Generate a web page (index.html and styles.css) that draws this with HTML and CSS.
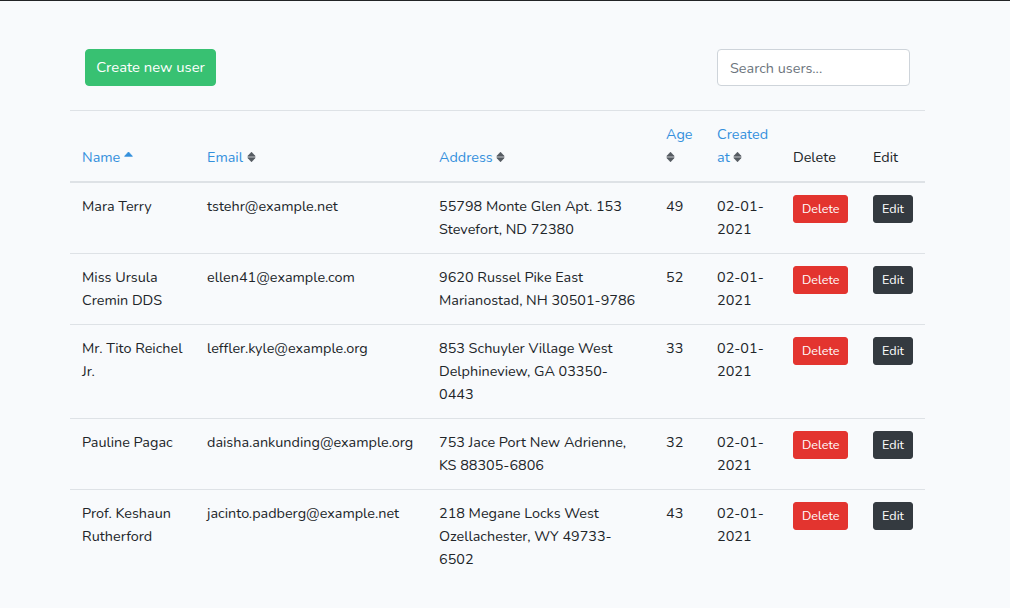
FILE: index.html
```html
<!DOCTYPE html>
<html lang="en">
<head>
<meta charset="utf-8">
<title>Users</title>
<link rel="stylesheet" href="styles.css">
</head>
<body>
<div class="page">
  <div class="toolbar">
    <button class="btn btn-success">Create new user</button>
    <input class="search" type="text" placeholder="Search users...">
  </div>
  <table class="users">
    <colgroup>
      <col class="c-name"><col class="c-email"><col class="c-address"><col class="c-age"><col class="c-created"><col class="c-delete"><col class="c-edit">
    </colgroup>
    <thead>
      <tr>
        <th><a class="sortable">Name <svg class="sort" viewBox="0 0 9 14"><path d="M0.6 6.3h7.8L4.5 2z" fill="#3490dc" stroke="#3490dc" stroke-width="0.8" stroke-linejoin="round"/></svg></a></th>
        <th><a class="sortable">Email <svg class="sort" viewBox="0 0 9 14"><path d="M0.8 6.2h7.4L4.5 2.2z M0.8 7.8h7.4L4.5 11.8z" fill="#555b61" stroke="#555b61" stroke-width="0.8" stroke-linejoin="round"/></svg></a></th>
        <th><a class="sortable">Address <svg class="sort" viewBox="0 0 9 14"><path d="M0.8 6.2h7.4L4.5 2.2z M0.8 7.8h7.4L4.5 11.8z" fill="#555b61" stroke="#555b61" stroke-width="0.8" stroke-linejoin="round"/></svg></a></th>
        <th><a class="sortable">Age <svg class="sort" viewBox="0 0 9 14"><path d="M0.8 6.2h7.4L4.5 2.2z M0.8 7.8h7.4L4.5 11.8z" fill="#555b61" stroke="#555b61" stroke-width="0.8" stroke-linejoin="round"/></svg></a></th>
        <th><a class="sortable">Created at <svg class="sort" viewBox="0 0 9 14"><path d="M0.8 6.2h7.4L4.5 2.2z M0.8 7.8h7.4L4.5 11.8z" fill="#555b61" stroke="#555b61" stroke-width="0.8" stroke-linejoin="round"/></svg></a></th>
        <th>Delete</th>
        <th>Edit</th>
      </tr>
    </thead>
    <tbody>
      <tr>
        <td>Mara Terry</td>
        <td>tstehr@example.net</td>
        <td>55798 Monte Glen Apt. 153 Stevefort, ND 72380</td>
        <td>49</td>
        <td>02-01-2021</td>
        <td><button class="btn btn-sm btn-danger">Delete</button></td>
        <td><button class="btn btn-sm btn-dark">Edit</button></td>
      </tr>
      <tr>
        <td>Miss Ursula Cremin DDS</td>
        <td>ellen41@example.com</td>
        <td>9620 Russel Pike East Marianostad, NH 30501-9786</td>
        <td>52</td>
        <td>02-01-2021</td>
        <td><button class="btn btn-sm btn-danger">Delete</button></td>
        <td><button class="btn btn-sm btn-dark">Edit</button></td>
      </tr>
      <tr>
        <td>Mr. Tito Reichel Jr.</td>
        <td>leffler.kyle@example.org</td>
        <td>853 Schuyler Village West Delphineview, GA 03350-0443</td>
        <td>33</td>
        <td>02-01-2021</td>
        <td><button class="btn btn-sm btn-danger">Delete</button></td>
        <td><button class="btn btn-sm btn-dark">Edit</button></td>
      </tr>
      <tr>
        <td>Pauline Pagac</td>
        <td>daisha.ankunding@example.org</td>
        <td>753 Jace Port New Adrienne, KS 88305-6806</td>
        <td>32</td>
        <td>02-01-2021</td>
        <td><button class="btn btn-sm btn-danger">Delete</button></td>
        <td><button class="btn btn-sm btn-dark">Edit</button></td>
      </tr>
      <tr>
        <td>Prof. Keshaun Rutherford</td>
        <td>jacinto.padberg@example.net</td>
        <td>218 Megane Locks West Ozellachester, WY 49733-6502</td>
        <td>43</td>
        <td>02-01-2021</td>
        <td><button class="btn btn-sm btn-danger">Delete</button></td>
        <td><button class="btn btn-sm btn-dark">Edit</button></td>
      </tr>
    </tbody>
  </table>
</div>
</body>
</html>
```

FILE: styles.css
```css
* { box-sizing: border-box; }
html, body { margin: 0; padding: 0; }
body {
  background: #f8fafc;
  border-top: 1px solid #222426;
  font-family: "Nunito", "Lato", "Noto Sans", sans-serif;
  font-size: 14.4px;
  line-height: 23px;
  color: #212529;
}
.page {
  width: 855px;
  margin: 0 0 0 70px;
  padding-top: 48px;
}
.toolbar {
  display: flex;
  justify-content: space-between;
  align-items: center;
  padding: 0 15px;
  margin-bottom: 24px;
}
.btn {
  font-family: inherit;
  font-size: 14.4px;
  line-height: 1.6;
  border: 1px solid transparent;
  border-radius: 4px;
  padding: 5px 12px;
  cursor: pointer;
  color: #fff;
}
.btn-success { background: #38c172; border-color: #38c172; height: 37px; width: 131px; padding: 0; font-size: 14.8px; }
.search {
  width: 193px;
  height: 37px;
  border: 1px solid #ced4da;
  border-radius: 4px;
  background: #fff;
  padding: 6px 12px;
  font-family: inherit;
  font-size: 14.4px;
  color: #495057;
}
.search::placeholder { color: #6c757d; }
.users {
  width: 100%;
  border-collapse: collapse;
  table-layout: fixed;
}
.c-name { width: 125px; }
.c-email { width: 232px; }
.c-address { width: 227px; }
.c-age { width: 51px; }
.c-created { width: 76px; }
.c-delete { width: 80px; }
.c-edit { width: 64px; }
.users th, .users td {
  padding: 12px;
  border-top: 1px solid #dee2e6;
  text-align: left;
}
.users th {
  vertical-align: bottom;
  font-weight: 400;
  border-bottom: 2px solid #dee2e6;
}
.users td { vertical-align: top; }
.users thead + tbody tr:first-child td { border-top: none; }
.sortable { color: #3490dc; text-decoration: none; cursor: pointer; }
.sort { width: 9px; height: 14px; vertical-align: -2px; }
.btn-sm {
  font-size: 12.6px;
  line-height: 1.5;
  padding: 4px 8px;
  border-radius: 3px;
  height: 28px;
}
.btn-danger { background: #e3342f; border-color: #e3342f; }
.btn-dark { background: #343a40; border-color: #343a40; }
```
